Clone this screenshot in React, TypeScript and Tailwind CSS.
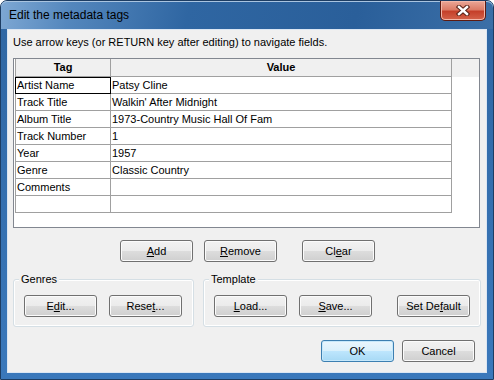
const btn =
  "flex h-[22px] w-[73px] shrink-0 items-center justify-center rounded-[3px] border border-[#707070] bg-[linear-gradient(#f2f2f2_0%,#ebebeb_50%,#dddddd_50%,#cfcfcf_100%)] text-[11px] leading-[14px] text-black shadow-[inset_0_0_0_1px_#fbfbfb]";

const okBtn =
  "flex h-[22px] w-[73px] shrink-0 items-center justify-center rounded-[3px] border border-[#3c7fb1] bg-[linear-gradient(#eaf6fd_0%,#d9f0fc_50%,#bee6fd_50%,#a7d9f5_100%)] text-[11px] leading-[14px] text-black shadow-[inset_0_0_0_1px_#c6e8fb]";

function Key({ children }: { children: string }) {
  return <u className="underline-offset-[1px]">{children}</u>;
}

function GroupBox({ label, width, children }: { label: string; width: string; children: React.ReactNode }) {
  return (
    <div className={`relative h-[48px] ${width} rounded-[3px] border border-[#d5dfe5] shadow-[inset_0_0_0_1px_#ffffff]`}>
      <span className="absolute -top-[8px] left-[5px] bg-[#f0f0f0] px-[2px] text-[11px] leading-[14px] text-black">
        {label}
      </span>
      <div className="flex pl-[10px] pt-[15px]">{children}</div>
    </div>
  );
}

const rows = [
  ['Artist Name', 'Patsy Cline'],
  ['Track Title', "Walkin' After Midnight"],
  ['Album Title', '1973-Country Music Hall Of Fam'],
  ['Track Number', '1'],
  ['Year', '1957'],
  ['Genre', 'Classic Country'],
  ['Comments', ''],
  ['', ''],
];

export default function App() {
  return (
    <div className="h-[380px] w-[494px] bg-white font-['Liberation_Sans',Arial,sans-serif]">
      <div className="relative flex h-full w-full flex-col rounded-t-[7px] border border-[#1d3d63] bg-[linear-gradient(#2f66a2,#3a78bb)]">
        {/* title bar */}
        <div className="flex h-[28px] items-center rounded-t-[6px] bg-[linear-gradient(100deg,#7ea8d4_0%,#5487bd_14%,#2f66a2_38%,#2a5f9a_72%,#3b6fa7_100%)] pl-[8px] text-[12px] text-black shadow-[inset_0_1px_0_#a9c4e0]">
          Edit the metadata tags
        </div>
        <div className="absolute right-[7px] top-0 flex h-[20px] w-[46px] items-center justify-center rounded-b-[5px] border border-t-0 border-[#5e1a10] bg-[linear-gradient(#eba797_0%,#dc7c67_45%,#c5402a_55%,#d4634a_100%)] shadow-[inset_0_0_0_1px_#f2b7a9]">
          <svg width="14" height="11" viewBox="0 0 14 11">
            <path d="M3 2 L11 9 M11 2 L3 9" stroke="#5a2318" strokeWidth="4.5" strokeLinecap="square" />
            <path d="M3 2 L11 9 M11 2 L3 9" stroke="#ffffff" strokeWidth="2.4" strokeLinecap="square" />
          </svg>
        </div>

        {/* client area */}
        <div className="mx-[6px] mb-[6px] flex flex-1 flex-col border border-[#dbe6f3] bg-[#f0f0f0]">
          <div className="pl-[5px] pt-[4px] text-[11px] leading-[16px] text-black">
            Use arrow keys (or RETURN key after editing) to navigate fields.
          </div>

          <div className="ml-[5px] mt-[8px] h-[170px] w-[467px] border border-[#828790] bg-white pl-[1px] text-[11px] leading-[16px] text-black">
            <div className="flex h-[18px] bg-[#f0f0f0]">
              <div className="w-[96px] border-x border-b border-[#a0a0a0] text-center font-bold">Tag</div>
              <div className="w-[341px] border-r border-b border-[#a0a0a0] text-center font-bold">Value</div>
              <div className="flex-1" />
            </div>
            {rows.map(([tag, value], i) => (
              <div key={i} className="flex h-[17px]">
                <div
                  className={`w-[96px] border-x border-b border-[#a0a0a0] pl-[1px] ${
                    i === 0 ? 'outline outline-black -outline-offset-1' : ''
                  }`}
                >
                  {tag}
                </div>
                <div className="w-[341px] border-r border-b border-[#a0a0a0] pl-[1px]">{value}</div>
              </div>
            ))}
          </div>

          <div className="ml-[112px] mt-[12px] flex">
            <div className={btn}>
              <Key>A</Key>dd
            </div>
            <div className={`${btn} ml-[11px]`}>
              <Key>R</Key>emove
            </div>
            <div className={`${btn} ml-[25px]`}>
              Cl<Key>e</Key>ar
            </div>
          </div>

          <div className="ml-[5px] mt-[17px] flex gap-[9px]">
            <GroupBox label="Genres" width="w-[181px]">
              <div className={btn}>
                E<Key>d</Key>it...
              </div>
              <div className={`${btn} ml-[12px]`}>
                Rese<Key>t</Key>...
              </div>
            </GroupBox>
            <GroupBox label="Template" width="w-[278px]">
              <div className={btn}>
                <Key>L</Key>oad...
              </div>
              <div className={`${btn} ml-[12px]`}>
                <Key>S</Key>ave...
              </div>
              <div className={`${btn} ml-[25px]`}>
                Set De<Key>f</Key>ault
              </div>
            </GroupBox>
          </div>

          <div className="ml-[313px] mt-[13px] flex">
            <div className={okBtn}>OK</div>
            <div className={`${btn} ml-[8px]`}>Cancel</div>
          </div>
        </div>
      </div>
    </div>
  );
}
